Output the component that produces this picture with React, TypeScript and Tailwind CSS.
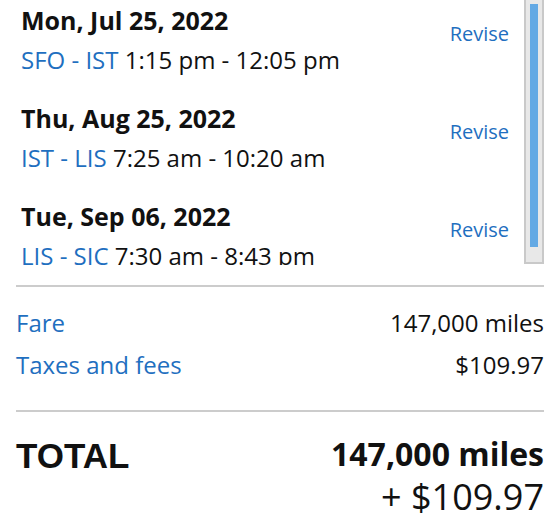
import React from "react";

const segments = [
    { date: "Mon, Jul 25, 2022", route: "SFO - IST", time: "1:15 pm - 12:05 pm" },
    { date: "Thu, Aug 25, 2022", route: "IST - LIS", time: "7:25 am - 10:20 am" },
    { date: "Tue, Sep 06, 2022", route: "LIS - SIC", time: "7:30 am - 8:43 pm" },
];

const App = () => {
    return (
        <div className="w-[550px] h-[528px] overflow-hidden bg-white pl-4 pr-[6px] font-['Open_Sans',sans-serif] text-[#111]">
            <div className="flex h-[265px]">
                <div className="flex-1 overflow-hidden pl-[5px] pr-[15px]">
                    {segments.map((s) => (
                        <div key={s.date} className="flex h-[98px] justify-between pt-[5px]">
                            <div>
                                <div className="text-[25px] font-bold leading-[30px] whitespace-nowrap">{s.date}</div>
                                <div className="mt-[10px] text-[24px] leading-[30px] whitespace-nowrap">
                                    <span className="text-[#1f6fc0]">{s.route}</span> {s.time}
                                </div>
                            </div>
                            <div className="mt-[17px] text-[20px] leading-[24px] text-[#1f6fc0]">Revise</div>
                        </div>
                    ))}
                </div>
                <div className="h-[264px] w-5 border-x-2 border-b-2 border-[#c9c9c9] bg-[#e8e8e8] px-1 pt-1">
                    <div className="h-[243px] w-2 bg-[#63a9e4]" />
                </div>
            </div>

            <div className="mt-5 border-t-2 border-[#cccccc]" />

            <div className="mt-5 flex flex-col gap-[10px]">
                <div className="flex justify-between leading-[32px]">
                    <span className="text-[24px] text-[#1f6fc0]">Fare</span>
                    <span className="text-[24px]">147,000 miles</span>
                </div>
                <div className="flex justify-between leading-[32px]">
                    <span className="text-[24px] text-[#1f6fc0]">Taxes and fees</span>
                    <span className="text-[24px]">$109.97</span>
                </div>
            </div>

            <div className="mt-[29px] border-t-2 border-[#cccccc]" />

            <div className="mt-[22px] flex justify-between">
                <div className="font-['Liberation_Sans',Arial,sans-serif] text-[35px] font-bold leading-[44px]">TOTAL</div>
                <div className="text-right">
                    <div className="text-[32px] font-bold leading-[40px]">147,000 miles</div>
                    <div className="mt-[3px] text-[36px] leading-[40px]">+ $109.97</div>
                </div>
            </div>
        </div>
    );
};

export default App;
